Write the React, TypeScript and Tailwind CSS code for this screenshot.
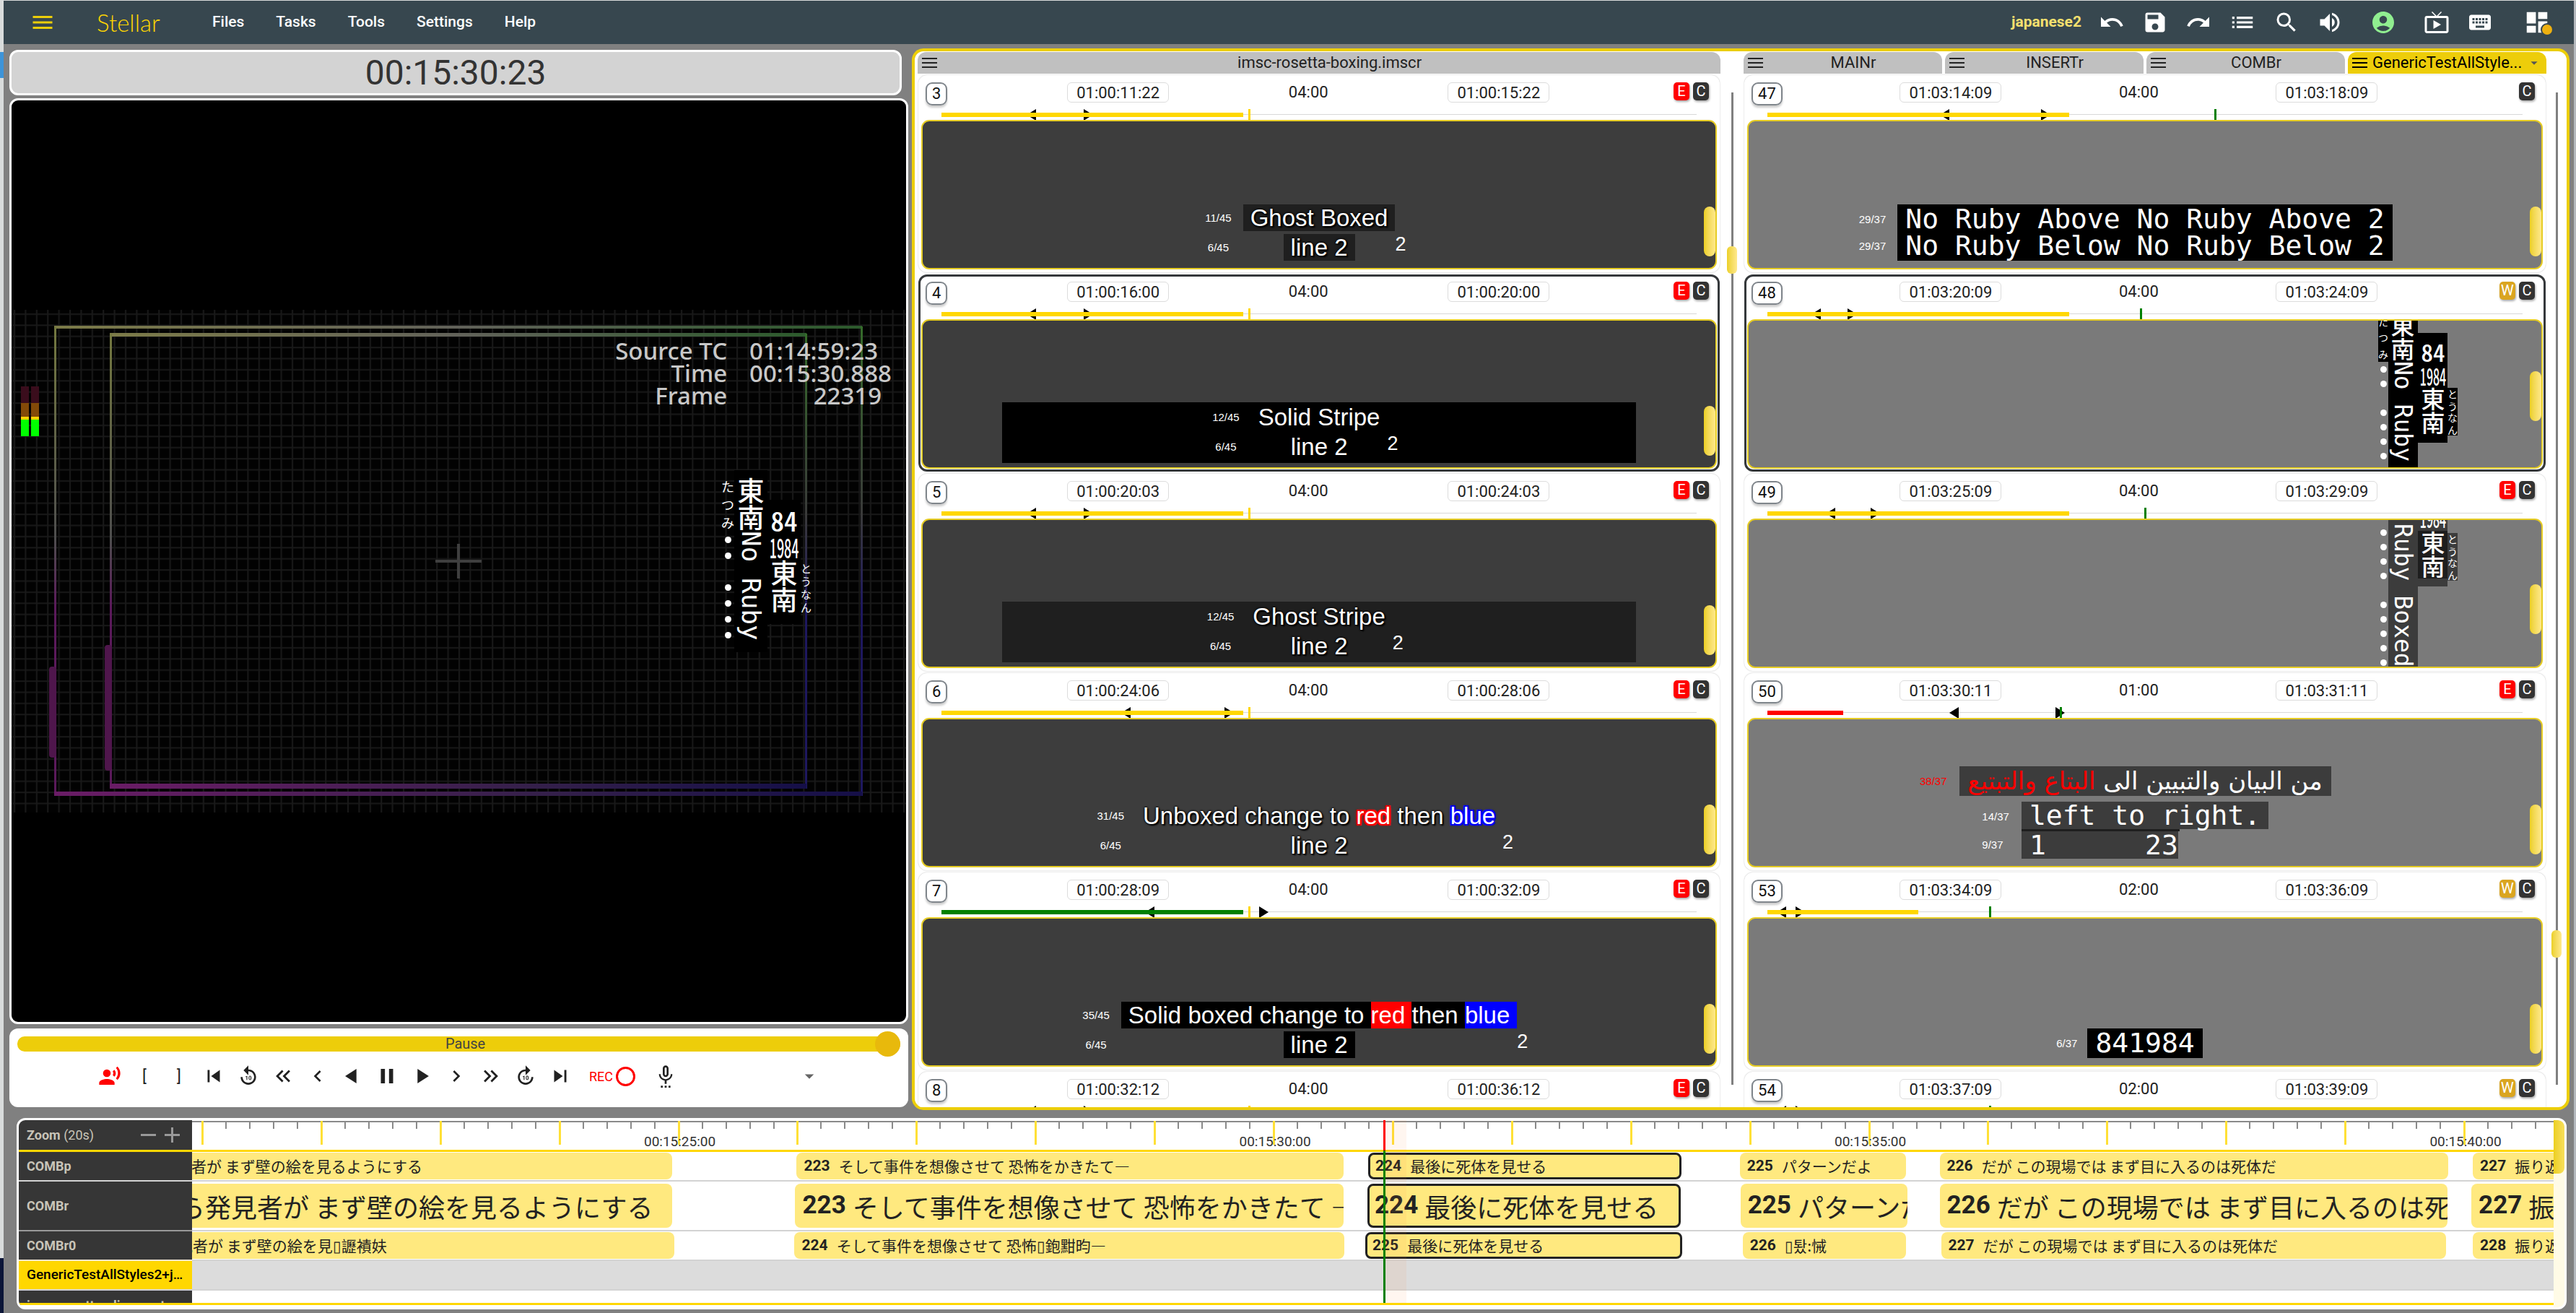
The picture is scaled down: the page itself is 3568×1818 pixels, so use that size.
import React from "react";
import {
  MdUndo, MdSave, MdRedo, MdList, MdSearch, MdVolumeUp, MdAccountCircle, MdLiveTv, MdKeyboard, MdDashboard,
  MdRecordVoiceOver, MdSkipPrevious, MdReplay10, MdKeyboardDoubleArrowLeft, MdChevronLeft, MdPlayArrow, MdPause,
  MdChevronRight, MdKeyboardDoubleArrowRight, MdForward10, MdSkipNext, MdOutlineSettingsVoice, MdArrowDropDown, MdMenu,
} from "react-icons/md";

const MENU = ["Files", "Tasks", "Tools", "Settings", "Help"];

function Bars({ className }: { className: string }) {
  return (
    <span className={`flex flex-col justify-between ${className}`} aria-hidden="true">
      <span className="h-[2px] bg-current" />
      <span className="h-[2px] bg-current" />
      <span className="h-[2px] bg-current" />
    </span>
  );
}

function Header() {
  return (
    <header className="flex h-[60px] shrink-0 items-center bg-[#37474f] pr-[32px] pl-[36px] text-white">
      <button aria-label="Menu" className="flex text-[#ecce09]">
        <MdMenu size={36} />
      </button>
      <span className="ml-[57px] w-[132px] font-[Lato,sans-serif] text-[33px] leading-[36px] font-light text-[#ffd700]">Stellar</span>
      <nav className="ml-[28px] flex gap-[44px] text-[21px] font-medium">
        {MENU.map((m) => (
          <button key={m}>{m}</button>
        ))}
      </nav>
      <div className="ml-auto flex items-center gap-[24px]">
        <span className="text-[21px] font-bold text-[#f5e06e]">japanese2</span>
        <button aria-label="Undo"><MdUndo size={36} /></button>
        <button aria-label="Save"><MdSave size={36} /></button>
        <button aria-label="Redo"><MdRedo size={36} /></button>
        <button aria-label="List"><MdList size={38} /></button>
        <button aria-label="Search"><MdSearch size={36} /></button>
        <button aria-label="Volume"><MdVolumeUp size={36} /></button>
        <button aria-label="Account" className="ml-[14px] text-[#90ee90]"><MdAccountCircle size={36} /></button>
        <button aria-label="Live" className="ml-[14px]"><MdLiveTv size={36} /></button>
        <button aria-label="Keyboard"><MdKeyboard size={36} /></button>
        <button aria-label="Layout" className="relative ml-[18px]">
          <MdDashboard size={38} />
          <span className="absolute right-[-2px] bottom-[2px] h-[14px] w-[14px] rounded-full bg-[#eeb111] ring-2 ring-[#37474f]" />
        </button>
      </div>
    </header>
  );
}

function TestFrame() {
  return (
    <svg viewBox="0 0 1239 697" className="h-full w-full" aria-hidden="true">
      <defs>
        <pattern id="mesh" width="15.4" height="15.4" patternUnits="userSpaceOnUse">
          <rect width="15.4" height="15.4" fill="#020202" />
          <path d="M4 0V15.4M0 6H15.4" stroke="#191919" strokeWidth="2" />
        </pattern>
        <linearGradient id="top" x1="0" x2="1" y1="0" y2="0">
          <stop offset="0" stopColor="#7c7b48" />
          <stop offset="0.5" stopColor="#62625a" />
          <stop offset="1" stopColor="#2c5a2c" />
        </linearGradient>
        <linearGradient id="left" x1="0" x2="0" y1="0" y2="1">
          <stop offset="0" stopColor="#757a40" />
          <stop offset="0.45" stopColor="#4f4f4f" />
          <stop offset="0.6" stopColor="#5c1a5c" />
          <stop offset="1" stopColor="#5c1a5c" />
        </linearGradient>
        <linearGradient id="right" x1="0" x2="0" y1="0" y2="1">
          <stop offset="0" stopColor="#356b2a" />
          <stop offset="0.4" stopColor="#3a3a3a" />
          <stop offset="0.6" stopColor="#1e1860" />
          <stop offset="1" stopColor="#1e1860" />
        </linearGradient>
        <linearGradient id="bottom" x1="0" x2="1" y1="0" y2="0">
          <stop offset="0" stopColor="#6a1c66" />
          <stop offset="0.6" stopColor="#35204a" />
          <stop offset="1" stopColor="#150f48" />
        </linearGradient>
      </defs>
      <rect width="1239" height="697" fill="url(#mesh)" />
      <rect x="59" y="22" width="1119" height="4" fill="url(#top)" />
      <rect x="136" y="32" width="965" height="5" fill="url(#top)" />
      <rect x="59" y="23" width="3" height="650" fill="url(#left)" />
      <rect x="136" y="33" width="3" height="630" fill="url(#left)" />
      <rect x="1099" y="33" width="3" height="630" fill="url(#right)" />
      <rect x="1176" y="23" width="3" height="650" fill="url(#right)" />
      <rect x="136" y="656" width="965" height="7" fill="url(#bottom)" />
      <rect x="59" y="667" width="1119" height="6" fill="url(#bottom)" />
      <rect x="52" y="494" width="10" height="126" rx="4" fill="#4f164c" />
      <rect x="129" y="464" width="10" height="174" rx="4" fill="#4f164c" />
      <path d="M587 348H651M619 324V372" stroke="#3f3f3f" strokeWidth="4" />
    </svg>
  );
}

function Meter() {
  const bar = (
    <span className="flex h-[69px] w-[11px] flex-col">
      <span className="h-[23px] bg-[#3a0d1c]" />
      <span className="h-[19px] bg-[#834a08]" />
      <span className="h-[4px] bg-[#ffd400]" />
      <span className="flex-1 bg-[#00ff00]" />
    </span>
  );
  return (
    <div className="absolute top-[106px] left-[13px] flex gap-[3px]" aria-label="Audio level">
      {bar}
      {bar}
    </div>
  );
}

function Dot() {
  return <span className="h-[9px] w-[9px] rounded-full bg-white" />;
}

const CJK = "font-[Noto_Sans_CJK_JP,sans-serif]";
const LATIN_MONO = "font-['DejaVu_Sans_Mono',monospace]";

function VideoCaption() {
  return (
    <div className={`absolute top-[222px] right-[131px] flex items-start text-white ${CJK}`}>
      <div className="flex w-[18px] flex-col items-center pt-[10px]">
        <span className="flex h-[76px] flex-col text-[18px] leading-[25px]"><span>た</span><span>つ</span><span>み</span></span>
        {[0, 1, 2, 3, 4, 5, 6].map((i) => (
          <span key={i} className="flex h-[22px] items-center">{i === 2 ? null : <Dot />}</span>
        ))}
      </div>
      <div className="h-[252px] w-[46px] bg-black pt-[10px] text-[37px] leading-[46px] font-medium [writing-mode:vertical-rl]">
        東南<span className={`text-[36px] ${LATIN_MONO}`}>No Ruby</span>
      </div>
      <div className="mt-[41px] h-[172px] w-[46px] bg-black pt-[9px] text-[37px] leading-[46px] font-medium [writing-mode:vertical-rl]">
        <span className="[text-combine-upright:all]">84</span>
        <span className="[text-combine-upright:all]">1984</span>
        東南
      </div>
      <div className="mt-[127px] flex w-[15px] flex-col items-center text-[15px] leading-[18px]">
        <span>と</span><span>う</span><span>な</span><span>ん</span>
      </div>
    </div>
  );
}

function VideoPanel() {
  return (
    <section className="flex min-h-0 flex-1 items-center overflow-hidden rounded-[12px] border-[3px] border-white bg-black">
      <div className="relative aspect-video w-full">
        <TestFrame />
        <div className="absolute top-[41px] right-[34px] grid grid-cols-[auto_183px] gap-x-[31px] text-right font-[Noto_Sans,sans-serif] text-[33px] leading-[31px] font-medium text-[#c8c8c8]">
          <span>Source TC</span><span className="text-left">01:14:59:23</span>
          <span>Time</span><span className="text-left whitespace-nowrap">00:15:30.888</span>
          <span>Frame</span><span>22319</span>
        </div>
        <Meter />
        <VideoCaption />
      </div>
    </section>
  );
}

function Transport() {
  const b = "flex w-[48px] items-center justify-center";
  return (
    <section className="relative h-[109px] shrink-0 rounded-[12px] bg-white px-[11px] pt-[11px]">
      <div className="relative flex h-[21px] items-center justify-center rounded-[10px] bg-[#edcd0a] pl-[18px] text-[20px] leading-[21px] text-[#444]">
        Pause
        <input
          type="range"
          aria-label="Speed"
          defaultValue={100}
          className="absolute top-[-7px] right-0 h-[35px] w-full cursor-pointer appearance-none bg-transparent [&::-webkit-slider-thumb]:h-[35px] [&::-webkit-slider-thumb]:w-[35px] [&::-webkit-slider-thumb]:appearance-none [&::-webkit-slider-thumb]:rounded-full [&::-webkit-slider-thumb]:bg-[#e8b90c]"
        />
      </div>
      <div className="mt-[16px] flex h-[36px] items-center pl-[104px] text-[#212121]">
        <button aria-label="Speak" className={`${b} text-[#f00]`}><MdRecordVoiceOver size={32} /></button>
        <button className={`${b} text-[22px]`}>[</button>
        <button className={`${b} text-[22px]`}>]</button>
        <button aria-label="Start" className={b}><MdSkipPrevious size={34} /></button>
        <button aria-label="Back 10" className={b}><MdReplay10 size={32} /></button>
        <button aria-label="Rewind" className={b}><MdKeyboardDoubleArrowLeft size={34} /></button>
        <button aria-label="Step back" className={b}><MdChevronLeft size={32} /></button>
        <button aria-label="Reverse" className={b}><MdPlayArrow size={34} className="rotate-180" /></button>
        <button aria-label="Pause" className={b}><MdPause size={34} /></button>
        <button aria-label="Play" className={b}><MdPlayArrow size={34} /></button>
        <button aria-label="Step" className={b}><MdChevronRight size={32} /></button>
        <button aria-label="Fast forward" className={b}><MdKeyboardDoubleArrowRight size={34} /></button>
        <button aria-label="Forward 10" className={b}><MdForward10 size={32} /></button>
        <button aria-label="End" className={b}><MdSkipNext size={34} /></button>
        <button className="ml-[16px] flex items-center gap-[4px] text-[18px] text-[#f00]">
          REC<span className="h-[27px] w-[27px] rounded-full border-[3px] border-[#f00]" />
        </button>
        <button aria-label="Voice" className={`${b} ml-[18px]`}><MdOutlineSettingsVoice size={32} /></button>
        <button aria-label="More" className="ml-auto mr-[111px] text-[#666]"><MdArrowDropDown size={30} /></button>
      </div>
    </section>
  );
}

type Cue = {
  id: number;
  start: string;
  dur: string;
  end: string;
  badge?: "E" | "W";
  bar: number;
  barColor: string;
  from: number;
  to: number;
  tick: number;
  tickColor: string;
  thumb: string;
  selected?: boolean;
  body?: React.ReactNode;
};

type Seg = { t: string; cls?: string };

const OUTLINE = "[text-shadow:0_0_3px_#000,0_0_3px_#000,2px_2px_2px_#000]";
const RED_OUTLINE = "[text-shadow:0_0_3px_#f00,0_0_3px_#f00,0_0_4px_#f00,0_0_4px_#f00,2px_2px_0_#f00,-2px_-2px_0_#f00,2px_-2px_0_#f00,-2px_2px_0_#f00]";
const BLUE_OUTLINE = "[text-shadow:0_0_3px_#00f,0_0_3px_#00f,0_0_4px_#00f,0_0_4px_#00f,2px_2px_0_#00f,-2px_-2px_0_#00f,2px_-2px_0_#00f,-2px_2px_0_#00f]";
const COUNT = "font-['Liberation_Sans',Arial,sans-serif] text-[15px]";

function BoxedCaption({ count, segs, box = "", stripe = "", shadow = "" }: { count: string; segs: Seg[]; box?: string; stripe?: string; shadow?: string }) {
  return (
    <div className={`mx-[10%] mb-[6px] grid grid-cols-[1fr_auto_1fr] font-['Liberation_Sans',Arial,sans-serif] text-white ${stripe}`}>
      <div className={`flex justify-end pr-[16px] text-center leading-[41px] ${COUNT}`}>
        <div><div>{count}</div><div>6/45</div></div>
      </div>
      <div className={`text-center text-[33px] leading-[37px] whitespace-pre ${shadow}`}>
        <div className={`my-[2px] flex ${box}`}>
          {segs.map((s, i) => (
            <span key={i} className={`${s.cls ?? ""} ${i === 0 ? "pl-[10px]" : ""} ${i === segs.length - 1 ? "pr-[10px]" : ""}`}>{s.t}</span>
          ))}
        </div>
        <div className="my-[4px] flex justify-center"><span className={`px-[10px] ${box}`}>line 2</span></div>
      </div>
      <div className="h-[41px] self-end text-[27px] leading-[28px]">2</div>
    </div>
  );
}

const MONO = `${LATIN_MONO} whitespace-pre`;

function DoubleLine() {
  return (
    <div className="mb-[10px] grid grid-cols-[1fr_auto_1fr] text-white">
      <div className={`py-[2px] pr-[16px] text-right leading-[37px] ${COUNT}`}>
        <div>29/37</div><div>29/37</div>
      </div>
      <div className={`bg-black px-[11px] py-[2px] text-[38px] leading-[37px] ${MONO}`}>
        <div>No Ruby Above No Ruby Above 2</div>
        <div>No Ruby Below No Ruby Below 2</div>
      </div>
    </div>
  );
}

function RubyColumn({ text, className }: { text: string; className: string }) {
  return (
    <span className={`flex flex-col items-center justify-around text-[14px] leading-[16px] ${className}`}>
      {text.split("").map((c, i) => <span key={i}>{c}</span>)}
    </span>
  );
}

function DotRun({ pattern }: { pattern: string }) {
  return (
    <>
      {pattern.split("").map((c, i) => (
        <span key={i} className="flex h-[20px] items-center">{c === "." ? <Dot /> : null}</span>
      ))}
    </>
  );
}

const VERT = "w-[41px] leading-[41px] text-[33px] font-medium whitespace-nowrap [writing-mode:vertical-rl]";

function VerticalSolid() {
  return (
    <div className={`absolute top-[-10px] right-[116px] flex items-start text-white ${CJK}`}>
      <div className="flex w-[14px] flex-col items-center">
        <RubyColumn text="たつみ" className="h-[67px] w-[14px] bg-black" />
        <DotRun pattern=".. ...." />
      </div>
      <div className={`h-[215px] bg-black ${VERT}`}>東南<span className={LATIN_MONO}>No Ruby</span></div>
      <div className={`mt-[27px] h-[152px] bg-black pt-[9px] ${VERT}`}>
        <span className="[text-combine-upright:all]">84</span>
        <span className="[text-combine-upright:all]">1984</span>
        東南
      </div>
      <RubyColumn text="とうなん" className="mt-[103px] h-[66px] w-[14px] bg-black" />
    </div>
  );
}

function VerticalGhost() {
  return (
    <div className={`absolute inset-y-0 right-[116px] flex items-start text-white ${CJK}`}>
      <div className="flex w-[14px] flex-col items-center pt-[7px]">
        <DotRun pattern=".... ....." />
      </div>
      <div className={`h-full bg-[#3c3c3c] pt-[5px] ${VERT} ${LATIN_MONO}`}>Ruby Boxed</div>
      <div className={`mt-[-20px] h-[112px] bg-[#3c3c3c] ${VERT}`}>
        <div className="flex flex-row items-start">
          <span className="[text-combine-upright:all]">1984</span>
          <span className="mt-[2px] bg-[#1e1e1e]">東南</span>
        </div>
      </div>
      <RubyColumn text="とうなん" className="mt-[18px] h-[66px] w-[14px] bg-[#3c3c3c]" />
    </div>
  );
}

function BidiCaption() {
  return (
    <div className="mb-[10px] text-white">
      <div className="grid grid-cols-[1fr_auto_1fr]">
        <div className={`pr-[17px] text-right leading-[41px] text-[#f00] ${COUNT}`}>38/37</div>
        <div dir="rtl" className="w-[515px] bg-[#3c3c3c] text-center font-['DejaVu_Sans',sans-serif] text-[34px] leading-[41px] whitespace-nowrap">
          من البيان والتبيين الى <span className="text-[#f00]">البتاع والتبتيع</span>
        </div>
      </div>
      <div className="mt-[8px] grid grid-cols-[1fr_auto_1fr]">
        <div className={`flex justify-end pr-[17px] ${COUNT}`}>
          <div><div className="leading-[41px]">14/37</div><div className="leading-[37px]">9/37</div></div>
        </div>
        <div className={`flex flex-col items-start text-[38px] leading-[38px] ${MONO}`}>
          <div className="bg-[#3c3c3c] px-[11px]">left to right.</div>
          <div className="h-[3px] w-[219px] bg-[#1e1e1e]" />
          <div className="bg-[#3c3c3c] pl-[11px]">1      23</div>
        </div>
      </div>
    </div>
  );
}

function DigitsCaption() {
  return (
    <div className="mb-[10px] grid grid-cols-[1fr_auto_1fr] text-white">
      <div className={`pr-[14px] text-right leading-[41px] ${COUNT}`}>6/37</div>
      <div className={`bg-black px-[11px] text-[38px] leading-[41px] ${MONO}`}>841984</div>
    </div>
  );
}

const Y = "bg-[#ffd700]";
const G = "bg-[#008000]";

const LEFT: Cue[] = [
  { id: 3, start: "01:00:11:22", dur: "04:00", end: "01:00:15:22", badge: "E", bar: 40, barColor: Y, from: 12.5, to: 18.8, tick: 40.6, tickColor: Y, thumb: "top-[118px]",
    body: <BoxedCaption count="11/45" segs={[{ t: "Ghost Boxed" }]} box="bg-[#1f1f1f]" shadow={OUTLINE} /> },
  { id: 4, start: "01:00:16:00", dur: "04:00", end: "01:00:20:00", badge: "E", bar: 40, barColor: Y, from: 12.5, to: 18.8, tick: 40.6, tickColor: Y, thumb: "top-[118px]", selected: true,
    body: <BoxedCaption count="12/45" segs={[{ t: "Solid Stripe" }]} stripe="bg-black" /> },
  { id: 5, start: "01:00:20:03", dur: "04:00", end: "01:00:24:03", badge: "E", bar: 40, barColor: Y, from: 12.5, to: 18.8, tick: 40.6, tickColor: Y, thumb: "top-[118px]",
    body: <BoxedCaption count="12/45" segs={[{ t: "Ghost Stripe" }]} stripe="bg-[#1f1f1f]" shadow={OUTLINE} /> },
  { id: 6, start: "01:00:24:06", dur: "04:00", end: "01:00:28:06", badge: "E", bar: 40, barColor: Y, from: 25, to: 37.5, tick: 40.6, tickColor: Y, thumb: "top-[118px]",
    body: <BoxedCaption count="31/45" segs={[{ t: "Unboxed change to " }, { t: "red", cls: RED_OUTLINE }, { t: " then " }, { t: "blue", cls: BLUE_OUTLINE }]} shadow={OUTLINE} /> },
  { id: 7, start: "01:00:28:09", dur: "04:00", end: "01:00:32:09", badge: "E", bar: 40, barColor: G, from: 28.2, to: 42.1, tick: 40.6, tickColor: Y, thumb: "top-[118px]",
    body: <BoxedCaption count="35/45" segs={[{ t: "Solid boxed change to " }, { t: "red ", cls: "bg-[#f00]" }, { t: "then " }, { t: "blue", cls: "bg-[#00f]" }]} box="bg-black" /> },
  { id: 8, start: "01:00:32:12", dur: "04:00", end: "01:00:36:12", badge: "E", bar: 40, barColor: Y, from: 12.5, to: 18.8, tick: 40.6, tickColor: Y, thumb: "top-[118px]" },
];

const RIGHT: Cue[] = [
  { id: 47, start: "01:03:14:09", dur: "04:00", end: "01:03:18:09", bar: 40, barColor: Y, from: 24.1, to: 36.2, tick: 59.2, tickColor: G, thumb: "top-[118px]", body: <DoubleLine /> },
  { id: 48, start: "01:03:20:09", dur: "04:00", end: "01:03:24:09", badge: "W", bar: 40, barColor: Y, from: 7.1, to: 10.6, tick: 49.3, tickColor: G, thumb: "top-[70px]", selected: true, body: <VerticalSolid /> },
  { id: 49, start: "01:03:25:09", dur: "04:00", end: "01:03:29:09", badge: "E", bar: 40, barColor: Y, from: 9, to: 13.7, tick: 49.9, tickColor: G, thumb: "top-[89px]", body: <VerticalGhost /> },
  { id: 50, start: "01:03:30:11", dur: "01:00", end: "01:03:31:11", badge: "E", bar: 10, barColor: "bg-[#f00]", from: 25.3, to: 38.1, tick: 38.7, tickColor: G, thumb: "top-[118px]", body: <BidiCaption /> },
  { id: 53, start: "01:03:34:09", dur: "02:00", end: "01:03:36:09", badge: "W", bar: 20, barColor: Y, from: 2.5, to: 3.7, tick: 29.3, tickColor: G, thumb: "top-[118px]", body: <DigitsCaption /> },
  { id: 54, start: "01:03:37:09", dur: "02:00", end: "01:03:39:09", badge: "W", bar: 20, barColor: Y, from: 2.5, to: 3.7, tick: 29.3, tickColor: G, thumb: "top-[118px]" },
];

function CueCard({ c }: { c: Cue }) {
  const flag = "flex h-[25px] w-[22px] items-center justify-center rounded-[5px] text-[20px] leading-[25px] text-white shadow-[1px_2px_3px_#0005]";
  const tc = "flex h-[28px] w-[141px] items-center justify-center rounded-[6px] border border-[#dcdcdc] text-center text-[22px] text-[#222]";
  return (
    <article className={`h-[273px] shrink-0 rounded-[12px] border-[3px] bg-white pt-[7px] ${c.selected ? "border-[#35383b]" : "border-white shadow-[0_0_2px_#bbb]"}`}>
      <div className="flex h-[32px] items-start justify-between pr-[12px] pl-[7px]">
        <span className="flex h-[32px] items-center rounded-[9px] border-2 border-[#80868c] px-[7px] text-[22px] leading-[28px] text-[#111] shadow-[0_3px_3px_#0003]">{c.id}</span>
        <input aria-label={`Cue ${c.id} in`} className={tc} defaultValue={c.start} />
        <span className="text-[22px] leading-[28px] text-[#222]">{c.dur}</span>
        <input aria-label={`Cue ${c.id} out`} className={tc} defaultValue={c.end} />
        <span className="flex w-[55px] justify-end gap-[5px]">
          {c.badge && <span className={`${flag} ${c.badge === "E" ? "bg-[#f00]" : "bg-[#daa520]"}`}>{c.badge}</span>}
          <span className={`${flag} bg-[#333]`}>C</span>
        </span>
      </div>
      <div className="relative mx-[29px] mt-[5px] h-[15px]">
        <span className="absolute inset-x-0 top-[7px] h-px bg-[#d8d8d8]" />
        <span className="absolute top-0 -ml-[13px] border-y-8 border-r-[13px] border-y-transparent border-r-black" style={{ left: `${c.from}%` }} />
        <span className="absolute top-0 border-y-8 border-l-[13px] border-y-transparent border-l-black" style={{ left: `${c.to}%` }} />
        <span className={`absolute top-[5px] left-0 h-[6px] ${c.barColor}`} style={{ width: `${c.bar}%` }} />
        <span className={`absolute top-0 h-[15px] w-[3px] ${c.tickColor}`} style={{ left: `${c.tick}%` }} />
      </div>
      <div className="relative mx-px flex h-[207px] flex-col justify-end overflow-hidden rounded-[11px] border-2 border-[#e6cc24] bg-[#3d3d3d] in-[.gray]:bg-[#7a7a7a]">
        {c.body}
        <span className={`absolute right-0 h-[69px] w-[16px] rounded-[8px] bg-linear-to-r from-[#eccf1c] to-[#ffe98a] ${c.thumb}`} />
      </div>
    </article>
  );
}

function Rail({ className }: { className: string }) {
  return (
    <div className={`relative mt-[57px] mb-[31px] flex shrink-0 justify-center ${className}`}>
      <span className="w-[3px] bg-[#808080]" />
    </div>
  );
}

function RailThumb({ className }: { className: string }) {
  return <span className={`absolute h-[38px] w-[14px] rounded-[6px] bg-linear-to-r from-[#ecd021] to-[#ffe98a] ${className}`} />;
}

function Tab({ label, active, className = "" }: { label: string; active?: boolean; className?: string }) {
  return (
    <button className={`flex h-[30px] items-center rounded-t-[12px] px-[6px] text-[22px] leading-[28px] text-[#222] ${active ? "bg-[#edcd0a] text-black" : "bg-[#c0c0c0]"} ${className}`}>
      <Bars className="h-[14px] w-[21px]" />
      <span className={active ? "ml-[7px] truncate" : "flex-1 pl-[8px] text-center"}>{label}</span>
      {active && <MdArrowDropDown size={22} className="ml-auto text-[#555]" />}
    </button>
  );
}

function CuePanel() {
  return (
    <section className="flex min-w-0 flex-1 overflow-hidden rounded-[16px] border-[4px] border-[#ecce09] bg-white pl-[4px]">
      <div className="flex min-w-0 flex-1 flex-col">
        <Tab label="imsc-rosetta-boxing.imscr" className="mt-px w-full" />
        <div className="flex min-h-0 flex-1 flex-col gap-[3px] overflow-hidden bg-white px-px pt-[2px]">
          {LEFT.map((c) => <CueCard key={c.id} c={c} />)}
        </div>
      </div>
      <div className="relative flex w-[32px]">
        <Rail className="w-[32px]" />
        <RailThumb className="top-[270px] left-[9px]" />
      </div>
      <div className="flex min-w-0 flex-1 flex-col">
        <div className="mt-px grid w-full grid-cols-4 gap-[4px]">
          <Tab label="MAINr" />
          <Tab label="INSERTr" />
          <Tab label="COMBr" />
          <Tab label="GenericTestAllStyle..." active />
        </div>
        <div className="gray flex min-h-0 flex-1 flex-col gap-[3px] overflow-hidden px-px pt-[2px]">
          {RIGHT.map((c) => <CueCard key={c.id} c={c} />)}
        </div>
      </div>
      <div className="relative flex w-[28px]">
        <Rail className="w-[28px]" />
        <RailThumb className="top-[1217px] left-[7px]" />
      </div>
    </section>
  );
}

/* Timeline geometry is expressed on a 3273-unit axis covering about 19.8 seconds. */
const AXIS = 3273;
const pct = (n: number) => `${(n / AXIS) * 100}%`;

type Clip = { n: string; text: string; x: number; w: number; on?: boolean };

const PREV = "ら発見者が まず壁の絵を見るようにする";
const T223 = "そして事件を想像させて 恐怖をかきたて";
const T224 = "最後に死体を見せる";
const T226 = "だが この現場では まず目に入るのは死体だ";

const TRACKS: { name: string; big?: boolean; clips: Clip[] }[] = [
  { name: "COMBp", clips: [
    { n: "", text: PREV, x: -74, w: 739 },
    { n: "223", text: T223 + "―", x: 838, w: 758 },
    { n: "224", text: T224, x: 1630, w: 434, on: true },
    { n: "225", text: "パターンだよ", x: 2145, w: 230 },
    { n: "226", text: T226, x: 2422, w: 705 },
    { n: "227", text: "振り返ると", x: 3161, w: 300 },
  ] },
  { name: "COMBr", big: true, clips: [
    { n: "", text: PREV, x: -28, w: 693 },
    { n: "223", text: T223 + " ―", x: 836, w: 760 },
    { n: "224", text: T224, x: 1629, w: 434, on: true },
    { n: "225", text: "パターンだよ", x: 2146, w: 231 },
    { n: "226", text: T226, x: 2422, w: 704 },
    { n: "227", text: "振り返ると", x: 3159, w: 300 },
  ] },
  { name: "COMBr0", clips: [
    { n: "", text: "ら発見者が まず壁の絵を見▯讈襀妋", x: -72, w: 740 },
    { n: "224", text: "そして事件を想像させて 恐怖▯鉋黚昀―", x: 835, w: 762 },
    { n: "225", text: T224, x: 1626, w: 439, on: true },
    { n: "226", text: "▯퇐:悈", x: 2149, w: 226 },
    { n: "227", text: T226, x: 2424, w: 700 },
    { n: "228", text: "振り返ると", x: 3161, w: 300 },
  ] },
];

function Track({ big, clips }: { big?: boolean; clips: Clip[] }) {
  return (
    <div className={`relative overflow-hidden border-b-2 border-[#d3d3d3] ${big ? "h-[69px]" : "h-[41px]"}`}>
      {clips.map((c) => (
        <div
          key={c.x}
          className={`absolute flex items-center overflow-hidden rounded-[8px] bg-[#ffe97f] whitespace-nowrap text-[#222] ${big ? "inset-y-[3px] gap-[9px] text-[36px]" : "inset-y-px gap-[12px] text-[21px]"} ${c.on ? "border-[3px] border-[#222] pl-[7px]" : "pl-[10px]"}`}
          style={{ left: pct(c.x), width: pct(c.w) }}
        >
          {c.n && <span className={`font-bold ${big ? "text-[35px]" : ""}`}>{c.n}</span>}
          <span className={CJK}>{c.text}</span>
        </div>
      ))}
    </div>
  );
}

function Ruler() {
  const ticks = Array.from({ length: 99 }, (_, i) => i);
  const labels = ["00:15:25:00", "00:15:30:00", "00:15:35:00", "00:15:40:00"];
  return (
    <div className="relative h-[44px] overflow-hidden border-b-[3px] border-[#ffd700]">
      <span className="absolute inset-x-0 top-px h-[2px] bg-[#8a8a8a]" />
      {ticks.map((i) => (
        <span
          key={i}
          className={`absolute top-px ${i % 5 ? "h-[11px] w-[2px] bg-[#8a8a8a]" : "h-[33px] w-[3px] bg-[#ffe036]"}`}
          style={{ left: pct(13 + i * 33) }}
        />
      ))}
      {labels.map((l, i) => (
        <span key={l} className="absolute bottom-0 -ml-[60px] w-[120px] text-center text-[19px] leading-[22px] text-[#333]" style={{ left: pct(676 + i * 825) }}>
          {l}
        </span>
      ))}
    </div>
  );
}

function Timeline() {
  const label = "flex items-center pl-[11px] text-[18px] font-bold text-[#c8c4b8]";
  return (
    <section className="mx-[10px] mt-[11px] mb-[5px] flex h-[265px] shrink-0 overflow-hidden rounded-[12px] border-[3px] border-white bg-white">
      <div className="mb-[3px] flex w-[240px] shrink-0 flex-col overflow-hidden border-b-[3px] border-[#ffd700] bg-[#363636]">
        <div className={`${label} h-[44px] shrink-0 border-b-[3px] border-[#ffd700]`}>
          Zoom&nbsp;<span className="font-normal">(20s)</span>
          <button aria-label="Zoom out" className="ml-auto h-[3px] w-[21px] bg-[#999]" />
          <button aria-label="Zoom in" className="relative mr-[17px] ml-[12px] flex h-[21px] w-[21px] items-center">
            <span className="h-[3px] w-full bg-[#999]" />
            <span className="absolute left-[9px] h-full w-[3px] bg-[#999]" />
          </button>
        </div>
        <div className={`${label} h-[41px] shrink-0 border-b-2 border-[#d3d3d3]`}>COMBp</div>
        <div className={`${label} h-[69px] shrink-0 border-b-2 border-[#999]`}>COMBr</div>
        <div className={`${label} h-[41px] shrink-0 border-b-2 border-[#f2e6d0]`}>COMBr0</div>
        <div className="flex h-[41px] shrink-0 items-center border-b-2 border-[#d3d3d3] bg-[#ffd700] pl-[11px] text-[19px] font-medium text-black">GenericTestAllStyles2+j…</div>
        <div className={`${label} h-[41px] shrink-0`}>imsc-rosetta-alignment…</div>
      </div>
      <div className="relative mb-[3px] min-w-0 flex-1 border-b-[3px] border-[#ffd700]">
        <Ruler />
        {TRACKS.map((t) => <Track key={t.name} big={t.big} clips={t.clips} />)}
        <div className="h-[41px] border-b-2 border-[#d3d3d3] bg-[#dcdcdc]" />
        <span className="absolute inset-y-0 w-[31px] bg-[#ff8c4414]" style={{ left: pct(1652) }} />
        <span className="absolute inset-y-0 flex w-[3px] flex-col" style={{ left: pct(1651) }}>
          <span className="h-[42px] bg-[#f00]" />
          <span className="flex-1 bg-[#008000]" />
        </span>
      </div>
      <div className="w-[15px] bg-[#fffbe6]">
        <div className="h-[74px] rounded-r-[8px] bg-linear-to-r from-[#eccf1c] to-[#f8df5a]" />
      </div>
    </section>
  );
}

export default function App() {
  return (
    <div className="flex h-screen overflow-hidden bg-[#d9dcdc] pt-px font-[Roboto,sans-serif]">
      <div className="flex w-[5px] shrink-0 flex-col">
        <span className="h-[71px]" />
        <span className="h-[36px] bg-[#3d94d9]" />
        <span className="flex-1" />
        <span className="h-[76px] bg-[#0b1538]" />
      </div>
      <div className="flex min-w-0 flex-1 flex-col bg-[#808080]">
        <Header />
        <main className="flex min-h-0 flex-1 gap-[5px] pr-[6px] pl-[8px]">
          <div className="flex w-[calc(35%+4px)] shrink-0 flex-col pt-[8px] pb-[4px]">
            <div className="mr-[9px] flex h-[63px] shrink-0 items-center justify-center rounded-[12px] border-[3px] border-white bg-[#d3d3d3] text-[48px] leading-[48px] text-[#333]">
              00:15:30:23
            </div>
            <div className="mt-[4px] flex min-h-0 flex-1 flex-col gap-[6px]">
              <VideoPanel />
              <Transport />
            </div>
          </div>
          <div className="flex min-w-0 flex-1 pt-[6px]">
            <CuePanel />
          </div>
        </main>
        <div className="flex flex-col pl-[8px]">
          <Timeline />
        </div>
      </div>
      <div className="w-[3px] shrink-0 bg-[#b4b8bd]" />
    </div>
  );
}
